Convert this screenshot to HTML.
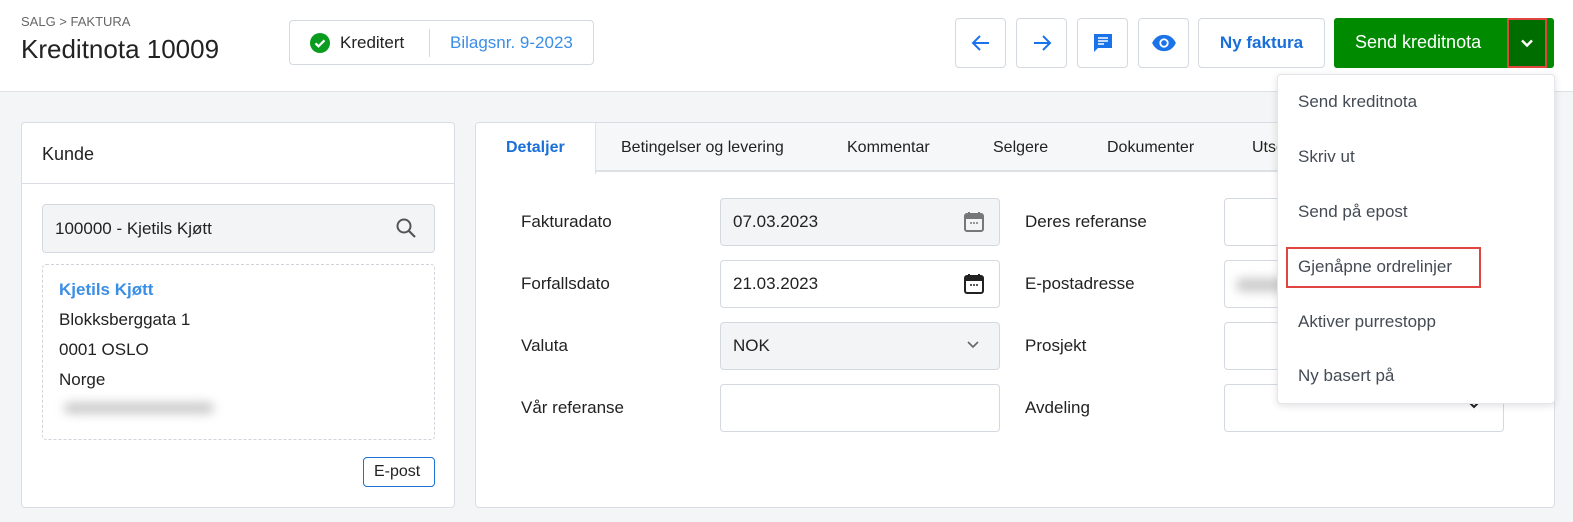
<!DOCTYPE html>
<html><head><meta charset="utf-8">
<style>
*{box-sizing:border-box;margin:0;padding:0}
body{width:1573px;height:522px;overflow:hidden;background:#f4f5f7;font-family:"Liberation Sans",Arial,sans-serif;color:#222;position:relative}
.abs{position:absolute}
.hdr{left:0;top:0;width:1573px;height:92px;background:#fff;border-bottom:1px solid #dde1e6}
.crumb{left:21px;top:14px;font-size:13px;color:#666}
.title{left:21px;top:34px;font-size:26px;color:#222}
.badge{left:289px;top:20px;width:305px;height:45px;border:1px solid #d4d9e0;border-radius:4px;background:#fff}
.btn{top:18px;height:50px;border:1px solid #d4d9e0;border-radius:4px;background:#fff;display:flex;align-items:center;justify-content:center}
.green{left:1334px;top:18px;width:220px;height:50px;background:#008a00;border-radius:3px;color:#fff;font-size:18px}
.panel{background:#fff;border:1px solid #d9dde3;border-radius:4px}
.lbl{font-size:17px;color:#222}
.inp{width:280px;height:48px;border:1px solid #d4d9e0;border-radius:4px;background:#fff;font-size:17px;padding:0 12px;display:flex;align-items:center}
.menu{left:1277px;top:74px;width:278px;height:330px;background:#fff;border:1px solid #e2e5e9;border-radius:4px;box-shadow:0 2px 8px rgba(0,0,0,.12)}
.mi{position:absolute;left:20px;font-size:17px;color:#444b55}
</style></head><body>
<div class="abs hdr"></div>
<div class="abs crumb">SALG &gt; FAKTURA</div>
<div class="abs title">Kreditnota 10009</div>
<div class="abs badge">
 <svg class="abs" style="left:20px;top:12px" width="20" height="20" viewBox="0 0 20 20"><circle cx="10" cy="10" r="10" fill="#0a9c1e"/><path d="M5.5 10.3l3 3 6-6" stroke="#fff" stroke-width="2.2" fill="none"/></svg>
 <span class="abs" style="left:50px;top:12px;font-size:17px">Kreditert</span>
 <div class="abs" style="left:139px;top:8px;width:1px;height:28px;background:#d4d9e0"></div>
 <span class="abs" style="left:160px;top:12px;font-size:17px;color:#3a8ee6">Bilagsnr. 9-2023</span>
</div>
<div class="abs btn" style="left:955px;width:51px"><svg width="24" height="24" viewBox="0 0 24 24"><path d="M20 12H5M11 5l-7 7 7 7" stroke="#1a73e8" stroke-width="2" fill="none"/></svg></div>
<div class="abs btn" style="left:1016px;width:51px"><svg width="24" height="24" viewBox="0 0 24 24"><path d="M4 12h15M13 5l7 7-7 7" stroke="#1a73e8" stroke-width="2" fill="none"/></svg></div>
<div class="abs btn" style="left:1077px;width:51px"><svg width="24" height="24" viewBox="0 0 24 24"><path d="M3 3h18v14H7l-4 4z" fill="#1a73e8"/><path d="M7 7h10M7 10h10M7 13h6" stroke="#fff" stroke-width="1.6"/></svg></div>
<div class="abs btn" style="left:1138px;width:51px"><svg width="26" height="26" viewBox="0 0 24 24"><path d="M1 12C4 6 8 4.5 12 4.5S20 6 23 12c-3 6-7 7.5-11 7.5S4 18 1 12z" fill="#1a73e8"/><circle cx="12" cy="12" r="4.3" fill="#fff"/><circle cx="12" cy="12" r="2.6" fill="#1a73e8"/></svg></div>
<div class="abs btn" style="left:1198px;width:127px;color:#1a6fd8;font-size:17px;font-weight:bold">Ny faktura</div>
<div class="abs green"><span class="abs" style="left:21px;top:14px">Send kreditnota</span>
 <div class="abs" style="left:173px;top:0;width:40px;height:50px;background:#006d00;border:2px solid #e0463f"></div>
 <svg class="abs" style="left:184px;top:16px" width="18" height="18" viewBox="0 0 18 18"><path d="M4 6.5l5 5 5-5" stroke="#fff" stroke-width="2.4" fill="none"/></svg>
</div>

<div class="abs panel" style="left:21px;top:122px;width:434px;height:386px">
 <div class="abs" style="left:20px;top:21px;font-size:18px">Kunde</div>
 <div class="abs" style="left:0;top:60px;width:432px;height:1px;background:#d9dde3"></div>
 <div class="abs inp" style="left:20px;top:81px;width:393px;height:49px;background:#f3f4f6">100000 - Kjetils Kjøtt</div>
 <svg class="abs" style="left:373px;top:94px" width="22" height="22" viewBox="0 0 22 22"><circle cx="9" cy="9" r="6.5" stroke="#555" stroke-width="2" fill="none"/><path d="M14 14l6 6" stroke="#555" stroke-width="2.2"/></svg>
 <div class="abs" style="left:20px;top:141px;width:393px;height:176px;border:1px dashed #cfd4da;border-radius:4px"></div>
 <div class="abs" style="left:37px;top:157px;font-size:17px;color:#3a8ee6;font-weight:bold">Kjetils Kjøtt</div>
 <div class="abs" style="left:37px;top:187px;font-size:17px">Blokksberggata 1</div>
 <div class="abs" style="left:37px;top:217px;font-size:17px">0001 OSLO</div>
 <div class="abs" style="left:37px;top:247px;font-size:17px">Norge</div>
 <div class="abs" style="left:42px;top:279px;width:150px;height:12px;border-radius:6px;background:#ccc;filter:blur(5px)"></div>
 <div class="abs" style="left:341px;top:334px;width:72px;height:30px;border:1px solid #1a6fd8;border-radius:4px;font-size:16px;padding:5px 0 0 10px">E-post</div>
</div>

<div class="abs panel" style="left:475px;top:122px;width:1080px;height:386px;overflow:hidden">
 <div class="abs" style="left:0;top:0;width:1080px;height:49px;background:#f6f7f8;border-bottom:2px solid #dde1e6"></div>
 <div class="abs" style="left:0;top:0;width:120px;height:51px;background:#fff;border-right:1px solid #dde1e6"></div>
 <div class="abs" style="left:30px;top:16px;font-size:16px;color:#1a6fd8;font-weight:bold">Detaljer</div>
 <div class="abs" style="left:145px;top:16px;font-size:16px">Betingelser og levering</div>
 <div class="abs" style="left:371px;top:16px;font-size:16px">Kommentar</div>
 <div class="abs" style="left:517px;top:16px;font-size:16px">Selgere</div>
 <div class="abs" style="left:631px;top:16px;font-size:16px">Dokumenter</div>
 <div class="abs" style="left:776px;top:16px;font-size:16px">Utsendelser</div>
</div>
<div class="abs lbl" style="left:521px;top:212px">Fakturadato</div>
<div class="abs lbl" style="left:521px;top:274px">Forfallsdato</div>
<div class="abs lbl" style="left:521px;top:336px">Valuta</div>
<div class="abs lbl" style="left:521px;top:398px">Vår referanse</div>
<div class="abs inp" style="left:720px;top:198px;background:#f3f4f6">07.03.2023</div>
<div class="abs inp" style="left:720px;top:260px">21.03.2023</div>
<div class="abs inp" style="left:720px;top:322px;background:#f3f4f6">NOK</div>
<div class="abs inp" style="left:720px;top:384px"></div>
<svg class="abs" style="left:963px;top:210px" width="22" height="24" viewBox="0 0 22 24"><rect x="2" y="4" width="18" height="17" rx="2" fill="none" stroke="#777" stroke-width="2"/><rect x="2" y="4" width="18" height="5" fill="#777"/><path d="M6 2v4M16 2v4" stroke="#777" stroke-width="2"/><path d="M7 13h2M10 13h2M13 13h2" stroke="#777" stroke-width="1.5"/></svg>
<svg class="abs" style="left:963px;top:272px" width="22" height="24" viewBox="0 0 22 24"><rect x="2" y="4" width="18" height="17" rx="2" fill="none" stroke="#222" stroke-width="2"/><rect x="2" y="4" width="18" height="5" fill="#222"/><path d="M6 2v4M16 2v4" stroke="#222" stroke-width="2"/><path d="M7 13h2M10 13h2M13 13h2" stroke="#222" stroke-width="1.5"/></svg>
<svg class="abs" style="left:965px;top:339px" width="16" height="12" viewBox="0 0 16 12"><path d="M3 3l5 5 5-5" stroke="#666" stroke-width="1.6" fill="none"/></svg>
<div class="abs lbl" style="left:1025px;top:212px">Deres referanse</div>
<div class="abs lbl" style="left:1025px;top:274px">E-postadresse</div>
<div class="abs lbl" style="left:1025px;top:336px">Prosjekt</div>
<div class="abs lbl" style="left:1025px;top:398px">Avdeling</div>
<div class="abs inp" style="left:1224px;top:198px"></div>
<div class="abs inp" style="left:1224px;top:260px"></div>
<div class="abs" style="left:1236px;top:278px;width:50px;height:14px;border-radius:7px;background:#ccc;filter:blur(5px)"></div>
<div class="abs inp" style="left:1224px;top:322px"></div>
<div class="abs inp" style="left:1224px;top:384px"></div>
<svg class="abs" style="left:1466px;top:399px" width="16" height="12" viewBox="0 0 16 12"><path d="M3 3l5 5 5-5" stroke="#222" stroke-width="2" fill="none"/></svg>

<div class="abs menu">
 <div class="mi" style="top:17px">Send kreditnota</div>
 <div class="mi" style="top:72px">Skriv ut</div>
 <div class="mi" style="top:127px">Send på epost</div>
 <div class="abs" style="left:8px;top:172px;width:195px;height:41px;border:2px solid #e0463f"></div>
 <div class="mi" style="top:182px">Gjenåpne ordrelinjer</div>
 <div class="mi" style="top:237px">Aktiver purrestopp</div>
 <div class="mi" style="top:291px">Ny basert på</div>
</div>
</body></html>
